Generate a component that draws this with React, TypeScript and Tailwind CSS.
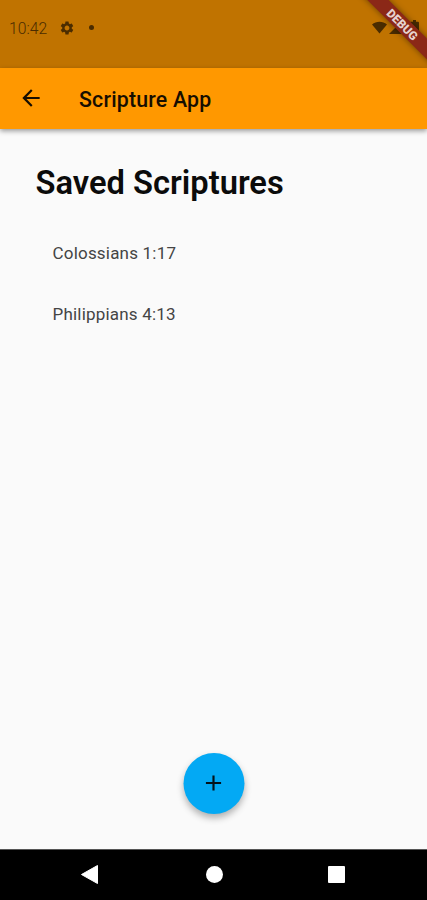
import { MdAdd, MdArrowBack, MdSettings } from 'react-icons/md';

const scriptures = ['Colossians 1:17', 'Philippians 4:13'];

function StatusBar() {
  return (
    <div className="flex h-[68px] items-start justify-between bg-[#c07300] pt-[18px] pr-[8px] pl-[9px] text-[#4a2c00]">
      <div className="flex h-[19px] items-center">
        <span className="w-[39px] pt-px text-[15.700px] leading-[19px] font-light whitespace-nowrap">10:42</span>
        <MdSettings className="ml-[11px] h-4 w-4" />
        <span className="ml-[14px] h-[5px] w-[5px] rounded-full bg-[#4a2c00]" />
      </div>
      <div className="flex h-[18px] items-center">
        <svg className="h-[13px] w-[15px]" viewBox="0 0 16 13" fill="#4a2c00">
          <path d="M8 13 0 3.2C2.300 1.200 5 .3 8 .3s5.700.9 8 2.900Z" />
        </svg>
        <svg className="ml-[2px] h-[14px] w-[14px]" viewBox="0 0 14 14" fill="#4a2c00">
          <path d="M0 14 14 0v14Z" />
        </svg>
        <svg className="ml-[7px] h-[15px] w-[9px]" viewBox="0 0 9 15" fill="#4a2c00">
          <path d="M1 1.800h2V0h3v1.800h2a1 1 0 0 1 1 1V14a1 1 0 0 1-1 1H1a1 1 0 0 1-1-1V2.800a1 1 0 0 1 1-1Z" />
        </svg>
      </div>
    </div>
  );
}

function DebugBanner() {
  return (
    <div className="pointer-events-none absolute top-0 right-0 h-[68px] w-[80px] overflow-hidden">
      <div className="absolute top-[17px] left-[-5px] flex h-[15px] w-[121px] rotate-45 items-center justify-center bg-[#8b2817] shadow-[0_0_6px_rgba(0,0,0,0.45)]">
        <span className="pt-px text-[12px] leading-none font-black text-[#e6d3cf]">DEBUG</span>
      </div>
    </div>
  );
}

function AppBar() {
  return (
    <header className="relative flex h-[61px] items-center bg-[#ff9800] pl-[18px] text-[#170e00] shadow-[0_2px_5px_rgba(0,0,0,0.4)]">
      <MdArrowBack className="mb-px h-[26px] w-[26px]" />
      <h1 className="ml-[35px] pt-[2px] text-[21.300px] leading-7 font-medium tracking-[0.200px]">Scripture App</h1>
    </header>
  );
}

function NavBar() {
  return (
    <nav className="flex h-[51px] items-center justify-between border-t border-[#555] bg-black pr-[82px] pb-[2px] pl-[81px]">
      <svg className="h-[19px] w-[17px]" viewBox="0 0 17 19" fill="#fff">
        <path d="M.5 9.500 16.500.5v18Z" stroke="#fff" strokeLinejoin="round" />
      </svg>
      <span className="ml-[2px] h-[17px] w-[17px] rounded-full bg-white" />
      <span className="h-[17px] w-[17px] rounded-[1px] bg-white" />
    </nav>
  );
}

export default function App() {
  return (
    <div className="relative flex h-[900px] w-[427px] flex-col overflow-hidden bg-[#fafafa] font-['Roboto',sans-serif]">
      <StatusBar />
      <AppBar />
      <main className="flex flex-1 flex-col">
        <h2 className="mt-[34px] ml-[35.500px] text-[32.700px] leading-10 font-semibold text-[#0b0b0b]">Saved Scriptures</h2>
        <ul className="mt-[20px]">
          {scriptures.map((item) => (
            <li key={item} className="flex h-[61px] items-center pl-[52.500px] text-[17px] tracking-[0.200px] text-[#444]">{item}</li>
          ))}
        </ul>
        <button
          type="button"
          aria-label="Add"
          className="mx-auto mt-auto mb-[35px] flex h-[61px] w-[61px] translate-x-[0.500px] items-center justify-center rounded-full bg-[#03a9f4] text-[#04131b] shadow-[0_4px_7px_rgba(0,0,0,0.3)]"
        >
          <MdAdd className="mr-px mb-px h-[26px] w-[26px]" />
        </button>
      </main>
      <NavBar />
      <DebugBanner />
    </div>
  );
}
